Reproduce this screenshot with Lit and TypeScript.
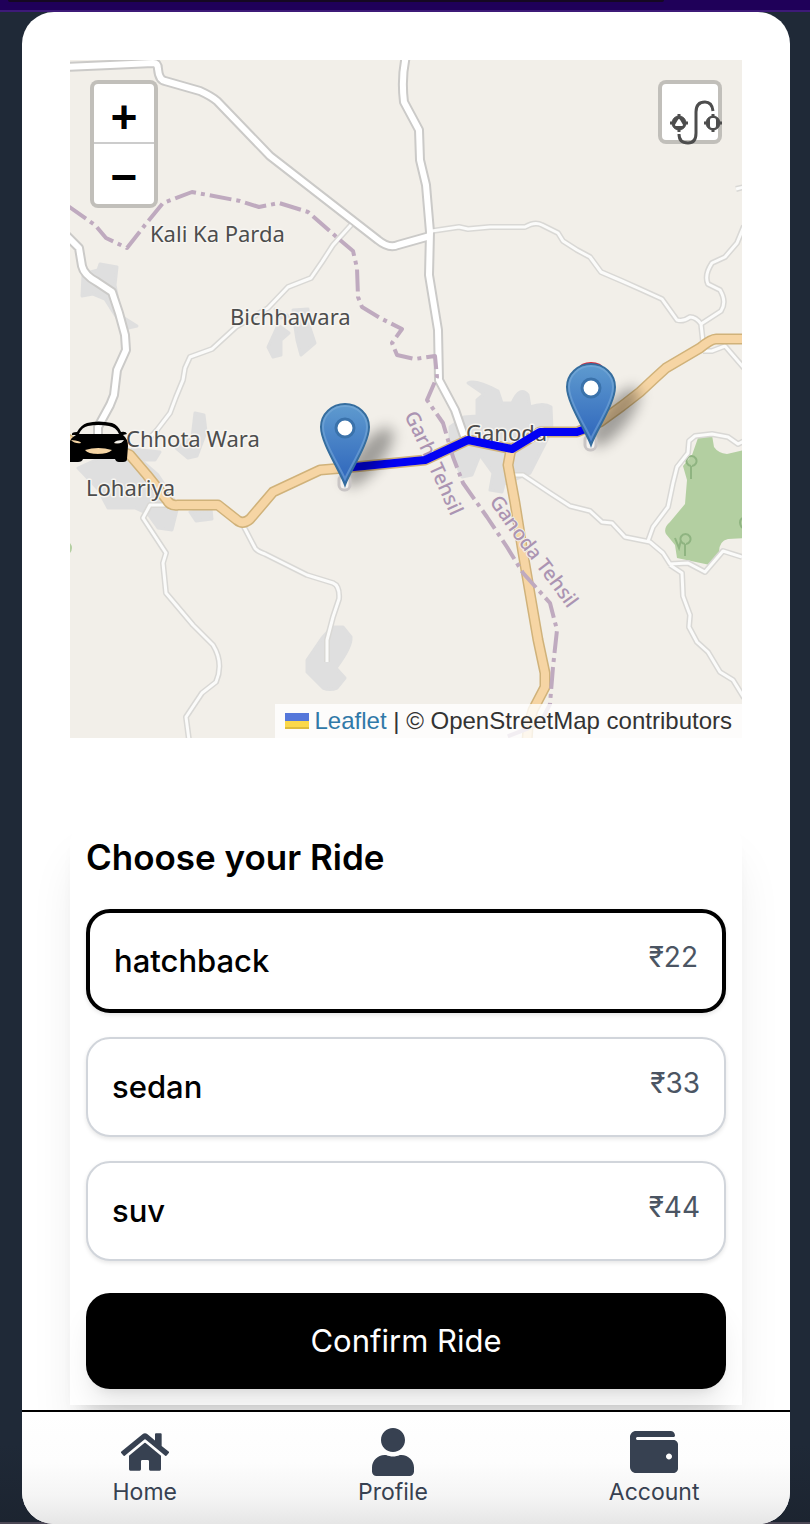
import { LitElement, html, css, svg } from "lit";
import { customElement, property, state } from "lit/decorators.js";

const pin = (x: number, y: number) => svg`
  <g transform="translate(${x} ${y})">
    <ellipse class="pin-shadow" cx="24" cy="-28" rx="13" ry="36" transform="rotate(38 24 -28)" />
    <rect class="stop" x="-6" y="-10" width="11" height="15" rx="5" />
    <path class="pin" d="M0 0C-5 -14 -24 -42 -24 -58A24 23 0 0 1 24 -58C24 -42 5 -14 0 0Z" />
    <path class="pin-rim" d="M0 -6C-5 -18 -22 -43 -22 -58A22 21 0 0 1 22 -58C22 -43 5 -18 0 -6Z" />
    <circle class="pin-eye" cx="0" cy="-57" r="9" />
  </g>`;

const majorRoads = [
  "M66 67L110 65L153 63Q158 63 158 69Q159 80 165 81L200 91Q211 96 217 101L270 156L378 240Q389 249 398 245L430 236",
  "M406 56Q401 78 404 102L419 130L420 160L426 185L430 232L429 275L438 330L439 380L455 410L464 436",
  "M66 235L79 248L82 266Q84 275 97 282L112 292L119 313L125 335L126 350L117 370L114 395L110 405L98 427V445",
];

const minorRoads = [
  "M351 225L333 245L322 262L311 278L288 287L268 308L236 327L212 349L190 357L185 368L183 380L176 397L170 413L157 430L148 440",
  "M432 231L459 227L468 229L490 227L525 227Q535 221 542 225L558 233L563 241L577 250L590 257L601 272L622 281L640 289L662 299L677 320Q683 322 690 317Q696 317 701 324L703 342",
  "M744 226L737 243L725 257L712 263Q704 275 708 284L720 290Q727 302 721 311L701 324",
  "M703 351H712L725 346L744 368",
  "M736 189L744 187",
  "M744 441L738 444L728 437L712 434L695 436L689 441L688 453L677 467L673 483L668 507L653 527L648 541",
  "M513 475H523L550 493L570 506L590 511L602 522L612 523L625 537L650 542L663 553L670 564L688 563L705 572L723 551L742 557",
  "M670 565L682 573L683 596L690 615L689 627L697 642L708 652L720 672L733 680L744 698",
  "M166 505H150L143 518L166 553L163 563L166 593L193 625L213 645Q224 663 216 682L202 693L186 717L189 740",
  "M243 525L255 548Q257 551 265 554L307 575L333 583Q340 586 339 599L333 617L327 640V662",
];

const highways = [
  "M66 438L86 450L116 449L130 455L147 475L167 500Q170 506 178 505H218L237 520Q243 525 250 519L273 492L320 470L344 468L425 460L468 440L512 449L540 432L577 432L600 422L622 406L640 392L655 378L666 368L700 348Q711 339 716 339H746",
  "M511 449L508 465L515 503L523 553L538 640L545 673V687L533 710L528 727L527 742",
];

const settlements = [
  "M83 274L98 270L100 264L117 267L115 285L118 300L121 316L137 326L124 329L105 299L93 294L82 296Z",
  "M275 309L289 316L280 318ZM278 325L289 333L281 340L281 355L273 357L268 347Z",
  "M293 310L308 309L309 325L315 343L301 355L297 340L295 327Z",
  "M195 413L204 415L206 432L197 456L188 458L176 448L192 438Z",
  "M132 449L160 452L155 460L140 460Z",
  "M78 468L100 458L128 449L158 475L178 506L172 530L158 528L148 514L135 508H108L98 489Z",
  "M190 512L211 509L212 519L196 521Z",
  "M332 627H343L351 637Q352 647 336 668L345 678L337 688Q330 691 323 688L307 672V660L322 638Z",
  "M468 383Q475 379 498 391L502 403L512 403Q520 385 528 395L530 407Q544 402 551 407L552 430L530 473L504 484L502 492L490 490L493 473L480 455L472 475L462 477L450 450V427L464 417L477 416L477 400L484 394Z",
];

@customElement("ride-map")
export class RideMap extends LitElement {
  static styles = css`
    :host {
      display: block;
      position: relative;
      overflow: hidden;
      background: #f2efe9;
    }
    .canvas {
      display: block;
      width: 100%;
      height: auto;
    }
    .line {
      fill: none;
      stroke-linejoin: round;
    }
    .major-case { stroke: #cbcac8; stroke-width: 10; }
    .major { stroke: #fff; stroke-width: 6; }
    .minor-case { stroke: #d9d8d5; stroke-width: 6; }
    .minor { stroke: #fbfbfa; stroke-width: 3; }
    .highway-case { stroke: #d0b27a; stroke-width: 11; }
    .highway { stroke: #f6d5a4; stroke-width: 8; }
    .settlement { fill: #dfdfdf; stroke: #dfdfdf; stroke-width: 3; stroke-linejoin: round; }
    .forest { fill: #b3cfa1; }
    .tree { fill: none; stroke: #8fb481; stroke-width: 2; }
    .border { stroke: #bfaabf; stroke-width: 4; stroke-dasharray: 22 5 4 5; }
    .route { stroke: #0202f4; stroke-width: 8; }
    .place {
      font: 22px "Noto Sans", sans-serif;
      fill: #4d4d4d;
      stroke: #f7f5f1;
      stroke-width: 3;
      stroke-linejoin: round;
      paint-order: stroke;
    }
    .district {
      font: 500 20px "Noto Sans", sans-serif;
      fill: #ab94b2;
      stroke: #f2efe9;
      stroke-width: 2;
      paint-order: stroke;
    }
    .stop { fill: #f4f2f0; stroke: #c9c5c5; stroke-width: 3; }
    .pin { fill: url(#pin-fill); stroke: #356d9e; stroke-width: 2; }
    .pin-rim { fill: none; stroke: #7fb0dc; stroke-opacity: 0.5; stroke-width: 2; }
    .pin-eye { fill: #fff; stroke: #3a72ab; stroke-width: 3; }
    .pin-shadow { fill: #000; opacity: 0.34; filter: url(#soft); }
    .pin-end { fill: #d6293a; }
    .zoom,
    .routing {
      position: absolute;
      top: 20px;
      border: 4px solid rgba(0, 0, 0, 0.2);
      border-radius: 8px;
      background: #fff;
      background-clip: padding-box;
    }
    .zoom {
      left: 20px;
      display: flex;
      flex-direction: column;
    }
    .zoom-button {
      box-sizing: border-box;
      width: 60px;
      height: 60px;
      padding: 14px 0 0;
      border: 0;
      background: none;
      color: #000;
      font: bold 46px/46px "Liberation Mono", monospace;
    }
    .zoom-button:first-child {
      border-bottom: 2px solid #ccc;
    }
    .routing {
      right: 20px;
      width: 64px;
      height: 64px;
      padding: 0;
    }
    .routing-icon {
      display: block;
      width: 56px;
      height: 56px;
      overflow: visible;
    }
    .credit {
      position: absolute;
      right: 0;
      bottom: 0;
      display: flex;
      align-items: center;
      padding: 0 10px;
      background: rgba(255, 255, 255, 0.8);
      color: #333;
      font: 24px/34px "Liberation Sans", Arial, sans-serif;
      white-space: pre;
    }
    .link {
      display: flex;
      align-items: center;
      gap: 6px;
      color: #3079a8;
      text-decoration: none;
    }
    .flag {
      width: 24px;
      height: 16px;
    }
  `;

  render() {
    return html`
      <svg class="canvas" viewBox="70 60 672 678" role="img" aria-label="Route map">
        <defs>
          <linearGradient id="pin-fill" x1="0" y1="0" x2="0" y2="1">
            <stop offset="0" stop-color="#5f9bcf" />
            <stop offset="1" stop-color="#2c63bb" />
          </linearGradient>
          <filter id="soft" x="-150%" y="-50%" width="400%" height="200%">
            <feGaussianBlur stdDeviation="7" />
          </filter>
          <path id="garhi" d="M404 415Q420 448 430 470T457 530" />
          <path id="ganoda" d="M489 501Q508 530 526 553T576 620" />
        </defs>
        ${settlements.map((d) => svg`<path class="settlement" d=${d} />`)}
        <path class="forest" d="M698 438L712 435L714 447Q718 453 727 454L744 450V538L728 539Q719 541 719 552L710 565L677 558L675 545L666 534Q663 528 670 522L685 504L687 480L683 466L692 455ZM70 543Q74 548 70 553Z" />
        <path class="tree" d="M691 479V466M691 466A5 5 0 1 1 692 466M685 556V544M685 544A5 5 0 1 1 686 544M675 538L679 548L681 540M742 518Q738 522 742 528" />
        ${minorRoads.map((d) => svg`<path class="line minor-case" d=${d} />`)}
        ${majorRoads.map((d) => svg`<path class="line major-case" d=${d} />`)}
        ${minorRoads.map((d) => svg`<path class="line minor" d=${d} />`)}
        ${majorRoads.map((d) => svg`<path class="line major" d=${d} />`)}
        ${highways.map((d) => svg`<path class="line highway-case" d=${d} />`)}
        ${highways.map((d) => svg`<path class="line highway" d=${d} />`)}
        <path class="line border" d="M68 206L95 225L106 238L127 248L145 225L163 203L192 192L240 201L259 207L279 203L308 212L340 240L353 251L357 268L358 297L362 307L380 318L402 329L392 343L397 355L415 359L435 356L437 377L427 400L443 423L453 457L463 483L487 517L507 547L523 573L550 603L557 630L553 667L550 704L540 724L506 737" />
        <text class="district"><textPath href="#garhi">Garhi Tehsil</textPath></text>
        <text class="district"><textPath href="#ganoda">Ganoda Tehsil</textPath></text>
        <text class="place" x="150" y="242">Kali Ka Parda</text>
        <text class="place" x="230" y="325">Bichhawara</text>
        <text class="place" x="126" y="447">Chhota Wara</text>
        <text class="place" x="86" y="496">Lohariya</text>
        <text class="place" x="466" y="441">Ganoda</text>
        <path class="line route" d="M344 468L425 460L468 440L512 449L540 432H577L591 427" />
        ${pin(345, 485)}
        <ellipse class="pin-end" cx="591" cy="368" rx="12" ry="6" />
        ${pin(591, 445)}
        <path
          fill-rule="evenodd"
          d="M70 441Q72 437 76 435L72 435Q71 432 77 432Q81 425 87 423Q98 420 112 423Q118 425 121 432Q126 431 127 434L123 435Q128 439 128 446L127 459Q127 462 123 462H119Q116 462 115 459H83Q82 462 78 462H70ZM79 434H119Q116 427 109 426Q98 424 88 426Q82 427 79 434ZM71 440Q75 444 81 443Q81 441 71 440ZM124 440Q115 440 114 443Q121 445 124 440ZM85 450Q88 454 98 454Q108 454 112 450Q98 446 85 450Z"
        />
      </svg>
      <div class="zoom">
        <button class="zoom-button" aria-label="Zoom in">+</button>
        <button class="zoom-button" aria-label="Zoom out">−</button>
      </div>
      <button class="routing" aria-label="Show directions">
        <svg class="routing-icon" viewBox="0 0 56 56" fill="none" stroke="#4d4d4d">
          <path stroke-width="3" d="M17 50Q17 59 26 59Q34 59 34 49V28Q34 18 43 18Q50 18 51 27" />
          <path stroke-width="3" d="M8 39H26M17 30V48M42 39H60M51 30V48" />
          <circle cx="17" cy="39" r="7" fill="#4d4d4d" />
          <circle cx="51" cy="39" r="7" fill="#4d4d4d" />
          <path stroke="#fff" stroke-linejoin="round" stroke-width="2" fill="#fff" d="M17 36L20 41H14Z" />
          <rect stroke="none" fill="#fff" x="48" y="34" width="6" height="10" rx="2" />
        </svg>
      </button>
      <div class="credit"><a class="link" href="#leaflet"><svg class="flag" viewBox="0 0 12 8"><path fill="#5577da" d="M0 0h12v4H0z" /><path fill="#fbd84b" d="M0 4h12v3H0z" /><path fill="#dfbc3c" d="M0 7h12v1H0z" /></svg>Leaflet</a><span> | © OpenStreetMap contributors</span></div>
    `;
  }
}

interface Ride {
  name: string;
  price: number;
}

@customElement("ride-picker")
export class RidePicker extends LitElement {
  @property({ attribute: false }) rides: Ride[] = [];
  @state() private selected = "hatchback";

  static styles = css`
    :host {
      display: block;
      padding: 16px;
      border-radius: 32px 32px 0 0;
      background: #fff;
      box-shadow: 0 40px 50px -10px rgba(0, 0, 0, 0.1), 0 16px 20px -12px rgba(0, 0, 0, 0.1);
      font-family: Inter, sans-serif;
    }
    .title {
      margin: 0 0 24px;
      font-size: 35px;
      font-weight: 600;
      line-height: 56px;
    }
    .rides {
      display: flex;
      flex-direction: column;
      gap: 24px;
    }
    .ride {
      display: flex;
      align-items: flex-start;
      justify-content: space-between;
      padding: 24px;
      border: 2px solid #d1d5db;
      border-radius: 24px;
      background: #fff;
      box-shadow: 0 2px 4px rgba(0, 0, 0, 0.1);
      color: #000;
      font-family: inherit;
    }
    .selected {
      border: 4px solid #000;
    }
    .name {
      font-size: 31px;
      font-weight: 500;
      line-height: 48px;
    }
    .price {
      color: #4b5563;
      font-size: 28px;
      line-height: 40px;
    }
    .confirm {
      display: block;
      width: 100%;
      margin-top: 32px;
      padding: 24px;
      border: 0;
      border-radius: 24px;
      background: #000;
      box-shadow: 0 20px 30px -6px rgba(0, 0, 0, 0.1), 0 8px 12px -8px rgba(0, 0, 0, 0.1);
      color: #fff;
      font: 31px/48px Inter, sans-serif;
    }
  `;

  render() {
    return html`
      <h2 class="title">Choose your Ride</h2>
      <div class="rides">
        ${this.rides.map(
          (ride) => html`
            <button
              class="ride ${ride.name === this.selected ? "selected" : ""}"
              aria-pressed=${ride.name === this.selected}
              @click=${() => (this.selected = ride.name)}
            >
              <span class="name">${ride.name}</span>
              <span class="price">₹${ride.price}</span>
            </button>
          `
        )}
      </div>
      <button class="confirm">Confirm Ride</button>
    `;
  }
}

const tabs = [
  {
    label: "Home",
    box: "0 0 576 512",
    path: "M280.37 148.26L96 300.11V464a16 16 0 0 0 16 16l112.06-.29a16 16 0 0 0 15.92-16V368a16 16 0 0 1 16-16h64a16 16 0 0 1 16 16v95.64a16 16 0 0 0 16 16.05L464 480a16 16 0 0 0 16-16V300L295.67 148.26a12.19 12.19 0 0 0-15.3 0zM571.6 251.47L488 182.56V44.05a12 12 0 0 0-12-12h-56a12 12 0 0 0-12 12v72.61L318.47 43a48 48 0 0 0-61 0L4.34 251.47a12 12 0 0 0-1.6 16.9l25.5 31A12 12 0 0 0 45.15 301l235.22-193.74a12.19 12.19 0 0 1 15.3 0L530.9 301a12 12 0 0 0 16.9-1.6l25.5-31a12 12 0 0 0-1.7-16.93z",
  },
  {
    label: "Profile",
    box: "0 0 448 512",
    path: "M224 256c70.7 0 128-57.3 128-128S294.7 0 224 0 96 57.3 96 128s57.3 128 128 128zm89.6 32h-16.7c-22.2 10.2-46.9 16-72.9 16s-50.6-5.8-72.9-16h-16.7C60.2 288 0 348.2 0 422.4V464c0 26.5 21.5 48 48 48h352c26.5 0 48-21.5 48-48v-41.6c0-74.2-60.2-134.4-134.4-134.4z",
  },
  {
    label: "Account",
    box: "0 0 512 512",
    path: "M461.2 128H80c-8.84 0-16-7.16-16-16s7.16-16 16-16h384c8.84 0 16-7.16 16-16 0-26.51-21.49-48-48-48H64C28.65 32 0 60.65 0 96v320c0 35.35 28.65 64 64 64h397.2c28.02 0 50.8-21.53 50.8-48V176c0-26.47-22.78-48-50.8-48zM416 336c-17.67 0-32-14.33-32-32s14.33-32 32-32 32 14.33 32 32-14.33 32-32 32z",
  },
];

@customElement("app-root")
export class AppRoot extends LitElement {
  private rides: Ride[] = [
    { name: "hatchback", price: 22 },
    { name: "sedan", price: 33 },
    { name: "suv", price: 44 },
  ];

  static styles = css`
    :host {
      display: flex;
      flex-direction: column;
      min-height: 100vh;
      background:
        linear-gradient(#4b4755, #4b4755) bottom / 100% 2px no-repeat,
        linear-gradient(to top, #1c2430, #1f2937 80px);
    }
    .strip {
      display: flex;
      box-sizing: border-box;
      height: 12px;
      padding: 0 18% 0 8px;
      border-bottom: 2px solid #3d1a78;
      background: #1f0059;
    }
    .strip-shade {
      flex: 1;
      height: 2px;
      border-radius: 0 0 4px 4px;
      background: #150822;
    }
    .screen {
      display: flex;
      flex: 1;
      flex-direction: column;
      margin: 0 20px 0 22px;
      border-radius: 32px;
      overflow: hidden;
      background: #fff;
    }
    .content {
      flex: 1;
      padding: 48px 48px 5px;
    }
    .picker {
      margin-top: 75px;
    }
    .tabs {
      position: relative;
      display: flex;
      justify-content: space-around;
      padding: 16px 0;
      border-top: 2px solid #000;
      background: linear-gradient(#fff, #fdfdfd 45%, #f5f5f5 75%, #e6e6e6);
    }
    .tab {
      display: flex;
      flex-direction: column;
      align-items: center;
      color: #374151;
      font: 23px/32px Inter, sans-serif;
      text-decoration: none;
    }
    .tab-icon {
      width: 48px;
      height: 48px;
      fill: currentColor;
    }
  `;

  render() {
    return html`
      <div class="strip"><div class="strip-shade"></div></div>
      <div class="screen">
        <main class="content">
          <ride-map></ride-map>
          <ride-picker class="picker" .rides=${this.rides}></ride-picker>
        </main>
        <nav class="tabs">
          ${tabs.map(
            (tab) => html`
              <a class="tab" href="#${tab.label.toLowerCase()}">
                <svg class="tab-icon" viewBox=${tab.box} aria-hidden="true"><path d=${tab.path} /></svg>
                ${tab.label}
              </a>
            `
          )}
        </nav>
      </div>
    `;
  }
}
